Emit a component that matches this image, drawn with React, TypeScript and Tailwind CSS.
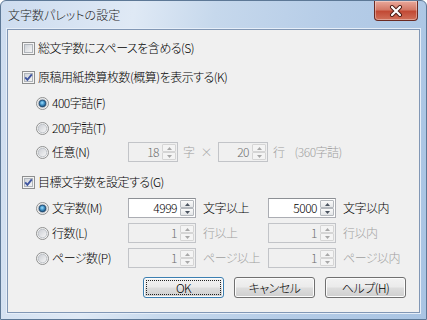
import clsx from "clsx"
import type { FC, ReactNode } from "react"

const CheckBox: FC<{ checked?: boolean }> = ({ checked }) => (
  <svg width="13" height="13" viewBox="0 0 13 13" className="shrink-0">
    <defs>
      <linearGradient id="cbIn" x1="0" y1="0" x2="1" y2="1">
        <stop offset="0" stopColor="#cdd1d7" />
        <stop offset="1" stopColor="#f7f7f7" />
      </linearGradient>
    </defs>
    <rect x="0.5" y="0.5" width="12" height="12" fill="#f4f4f4" stroke="#8e8f8f" />
    <rect x="2.5" y="2.5" width="8" height="8" fill="url(#cbIn)" stroke="#b0b5bb" />
    {checked ? (
      <path d="M3.2 6.4 L5.4 8.8 L9.8 3.4" stroke="#3f55a0" strokeWidth="1.9" fill="none" />
    ) : null}
  </svg>
)

const Radio: FC<{ checked?: boolean }> = ({ checked }) => (
  <svg width="13" height="13" viewBox="0 0 13 13" className="shrink-0">
    <defs>
      <linearGradient id="rdIn" x1="0" y1="0" x2="1" y2="1">
        <stop offset="0" stopColor="#c9ccd2" />
        <stop offset="1" stopColor="#f8f8f8" />
      </linearGradient>
      <radialGradient id="rdSel" cx="0.45" cy="0.4" r="0.6">
        <stop offset="0" stopColor="#9ee0ff" />
        <stop offset="0.55" stopColor="#3c8dc3" />
        <stop offset="1" stopColor="#1a4a73" />
      </radialGradient>
    </defs>
    <circle cx="6.5" cy="6.5" r="6" fill="#f4f4f4" stroke="#8e8f8f" />
    <circle cx="6.5" cy="6.5" r="4.3" fill="url(#rdIn)" stroke="#b3b8be" strokeWidth="0.8" />
    {checked ? <circle cx="6.5" cy="6.5" r="3.4" fill="url(#rdSel)" stroke="#20486d" strokeWidth="0.8" /> : null}
  </svg>
)

const SpinBtn: FC<{ up?: boolean; disabled?: boolean }> = ({ up, disabled }) => (
  <div
    className={clsx(
      "flex h-[8px] items-center justify-center rounded-[1px] border",
      disabled
        ? "border-[#d5d5d5] bg-[#f4f4f4]"
        : "border-[#b4b8bd] bg-[linear-gradient(to_bottom,#fafafa,#e4e6e8)]"
    )}
  >
    <svg width="5" height="3" viewBox="0 0 5 3">
      <path d={up ? "M0 3 L2.5 0 L5 3 Z" : "M0 0 L2.5 3 L5 0 Z"} fill={disabled ? "#a8a8a8" : "#4b5460"} />
    </svg>
  </div>
)

const Spin: FC<{ value: string; width: string; disabled?: boolean }> = ({ value, width, disabled }) => (
  <div
    className={clsx(
      "flex h-[20px] shrink-0 items-stretch border p-[1px]",
      disabled ? "border-[#c2c4c8] bg-[#f0f0f0]" : "border-[#abadb3] border-t-[#8c8f94] bg-white",
      width
    )}
  >
    <div className={clsx("flex-1 pr-[3px] text-right leading-[16px]", disabled ? "text-[#6d6d6d]" : "text-black")}>
      {value}
    </div>
    <div className="flex w-[14px] flex-col justify-center">
      <SpinBtn up disabled={disabled} />
      <SpinBtn disabled={disabled} />
    </div>
  </div>
)

const Row: FC<{ className: string; children: ReactNode }> = ({ className, children }) => (
  <div className={clsx("flex h-[20px] items-center", className)}>{children}</div>
)

const Btn: FC<{ children: ReactNode; primary?: boolean }> = ({ children, primary }) => (
  <button
    className={clsx(
      "h-[21px] w-[81px] rounded-[3px] border p-[2px] text-black shadow-[inset_0_0_0_1px_#fcfcfc]",
      "bg-[linear-gradient(to_bottom,#f2f2f2_0%,#ebebeb_48%,#dddddd_52%,#cfcfcf_100%)]",
      primary ? "border-[#3c7fb1]" : "border-[#707070]"
    )}
  >
    <div
      className={clsx(
        "flex h-full items-center justify-center leading-none",
        primary ? "border border-dotted border-[#222]" : "border border-transparent"
      )}
    >
      {children}
    </div>
  </button>
)

export default function App() {
  return (
    <div className="h-[320px] w-[427px] overflow-hidden rounded-t-[6px] border border-[#5d7896] bg-[linear-gradient(100deg,#cddcef_0%,#dfe9f5_28%,#c6d8ec_45%,#b5cce7_70%,#a9c4e3_100%)] font-['Noto_Sans_CJK_JP',sans-serif] text-[12px] font-light text-black [font-feature-settings:'palt']">
      <div className="flex h-[28px] items-start justify-between pl-[7px] pr-[8px]">
        <div className="mt-[6px] leading-[16px] text-[#1e1e1e]">文字数パレットの設定</div>
        <div className="flex h-[20px] w-[44px] items-center justify-center rounded-b-[4px] border border-t-0 border-[#6b2a22] bg-[linear-gradient(to_bottom,#e9a99b_0%,#d47a68_45%,#c24a35_55%,#d0705a_100%)] shadow-[inset_0_0_0_1px_rgba(255,255,255,0.35)]">
          <svg width="14" height="12" viewBox="0 0 14 12">
            <path d="M3 2 L11 10 M11 2 L3 10" stroke="#4a1c14" strokeWidth="4" strokeLinecap="round" />
            <path d="M3 2 L11 10 M11 2 L3 10" stroke="#ffffff" strokeWidth="2.2" strokeLinecap="round" />
          </svg>
        </div>
      </div>
      <div className="ml-[6px] h-[284px] w-[413px] border border-[#8197b5] bg-[#f0f0f0] tracking-[-0.5px] shadow-[0_0_0_1px_#e6eef8]">
        <Row className="mt-[8px] pl-[14px]">
          <CheckBox />
          <span className="ml-[3px]">総文字数にスペースを含める(S)</span>
        </Row>
        <Row className="mt-[9px] pl-[14px]">
          <CheckBox checked />
          <span className="ml-[3px]">原稿用紙換算枚数(概算)を表示する(K)</span>
        </Row>
        <Row className="mt-[6px] pl-[28px]">
          <Radio checked />
          <span className="ml-[3px]">400字詰(F)</span>
        </Row>
        <Row className="mt-[5px] pl-[28px]">
          <Radio />
          <span className="ml-[3px]">200字詰(T)</span>
        </Row>
        <Row className="mt-[4px] pl-[28px]">
          <div className="flex w-[92px] items-center">
            <Radio />
            <span className="ml-[3px]">任意(N)</span>
          </div>
          <Spin value="18" width="w-[50px]" disabled />
          <div className="flex w-[40px] gap-[6px] pl-[5px] text-[#a0a0a0]">
            <span>字</span>
            <span>×</span>
          </div>
          <Spin value="20" width="w-[50px]" disabled />
          <span className="pl-[5px] text-[#a0a0a0]">行</span>
          <span className="pl-[10px] text-[#a0a0a0]">(360字詰)</span>
        </Row>
        <Row className="mt-[10px] pl-[14px]">
          <CheckBox checked />
          <span className="ml-[3px]">目標文字数を設定する(G)</span>
        </Row>
        <Row className="mt-[6px] pl-[28px]">
          <div className="flex w-[92px] items-center">
            <Radio checked />
            <span className="ml-[3px]">文字数(M)</span>
          </div>
          <Spin value="4999" width="w-[68px]" />
          <span className="w-[72px] pl-[7px]">文字以上</span>
          <Spin value="5000" width="w-[68px]" />
          <span className="pl-[7px]">文字以内</span>
        </Row>
        <Row className="mt-[5px] pl-[28px]">
          <div className="flex w-[92px] items-center">
            <Radio />
            <span className="ml-[3px]">行数(L)</span>
          </div>
          <Spin value="1" width="w-[68px]" disabled />
          <span className="w-[72px] pl-[7px] text-[#a0a0a0]">行以上</span>
          <Spin value="1" width="w-[68px]" disabled />
          <span className="pl-[7px] text-[#a0a0a0]">行以内</span>
        </Row>
        <Row className="mt-[5px] pl-[28px]">
          <div className="flex w-[92px] items-center">
            <Radio />
            <span className="ml-[3px]">ページ数(P)</span>
          </div>
          <Spin value="1" width="w-[68px]" disabled />
          <span className="w-[72px] pl-[7px] text-[#a0a0a0]">ページ以上</span>
          <Spin value="1" width="w-[68px]" disabled />
          <span className="pl-[7px] text-[#a0a0a0]">ページ以内</span>
        </Row>
        <div className="mt-[9px] flex justify-end gap-[10px] pr-[13px]">
          <Btn primary>OK</Btn>
          <Btn>キャンセル</Btn>
          <Btn>ヘルプ(H)</Btn>
        </div>
      </div>
    </div>
  )
}
